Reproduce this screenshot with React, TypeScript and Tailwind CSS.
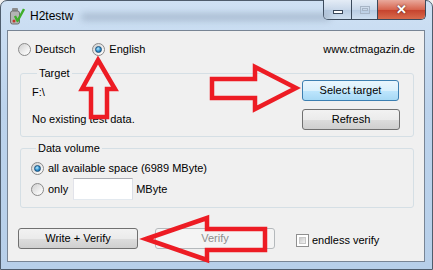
import React from "react";

const Radio = ({ checked }: { checked?: boolean }) => (
    <span className="flex items-center justify-center w-[13px] h-[13px] shrink-0 rounded-full border border-[#8a8a8a] bg-[linear-gradient(135deg,#cfcfcf,#f4f4f4_70%,#ffffff)]">
        {checked && (
            <span className="w-[7px] h-[7px] rounded-full border border-[#1b4f7a] bg-[radial-gradient(circle_at_40%_35%,#b8ecff,#2b8ccc_55%,#0f5c94)]" />
        )}
    </span>
);

const Button = ({
    label,
    w,
    focused,
    disabled,
}: {
    label: string;
    w: string;
    focused?: boolean;
    disabled?: boolean;
}) => {
    if (disabled) {
        return (
            <div className={`${w} h-[21px] flex items-center justify-center rounded-[3px] border border-[#b5b9bc] bg-[#f4f4f4] text-[#8d8d8d]`}>
                {label}
            </div>
        );
    }
    return (
        <div
            className={`${w} h-[21px] flex items-center justify-center rounded-[3px] border ${
                focused
                    ? "border-[#3c7fb1] bg-[linear-gradient(#eaf6fd,#d9f0fc_50%,#bee6fd_51%,#a7d9f5)]"
                    : "border-[#707070] bg-[linear-gradient(#f2f2f2,#ebebeb_50%,#dddddd_51%,#cfcfcf)]"
            }`}
        >
            {label}
        </div>
    );
};

const AppIcon = () => (
    <svg width="16" height="18" viewBox="0 0 16 18">
        <rect x="3" y="1" width="6" height="4" rx="1" fill="#8c8c8c" />
        <rect x="1.5" y="4" width="9" height="13" rx="2" fill="#b4b4b4" stroke="#6f6f6f" />
        <circle cx="5" cy="14" r="1.5" fill="#c0392b" />
        <path d="M6 9 L8.5 14 L15 2" fill="none" stroke="#3fae2a" strokeWidth="2.4" strokeLinejoin="round" />
    </svg>
);

export default function App() {
    return (
        <div className="relative w-[433px] h-[270px] overflow-hidden bg-[#f0f0f0] font-['Liberation_Sans',Arial,sans-serif] text-[11px] text-black">
            {/* window frame */}
            <div className="flex flex-col w-full h-full rounded-t-[7px] border border-[#4f5d6d] bg-[linear-gradient(#cfe1f4,#bcd3ec_40%,#b7cfe9)]">
                {/* title bar */}
                <div className="relative flex items-start h-[29px]">
                    <div className="absolute left-[80px] top-[12px] w-[250px] h-[8px] rounded-full bg-[#7d8fa6]/40 blur-[3px]" />
                    <div className="ml-[8px] mt-[6px]">
                        <AppIcon />
                    </div>
                    <span className="ml-[5px] mt-[8px] text-[12px] leading-[15px]">H2testw</span>
                    <div className="ml-auto mr-[6px] flex h-[20px] mt-[-1px] rounded-b-[5px] border border-t-0 border-[#3b4a5c] overflow-hidden">
                        <div className="w-[28px] h-full flex items-center justify-center border-r border-[#3b4a5c] bg-[linear-gradient(#e4ecf6,#c9d8ea_50%,#b7cbe2_51%,#cfdff0)]">
                            <div className="w-[10px] h-[4px] mt-[5px] bg-white border border-[#39475a]" />
                        </div>
                        <div className="w-[26px] h-full flex items-center justify-center border-r border-[#3b4a5c] bg-[linear-gradient(#e4ecf6,#c9d8ea_50%,#b7cbe2_51%,#cfdff0)]">
                            <div className="w-[10px] h-[8px] border border-[#a7b5c6] flex items-center justify-center">
                                <div className="w-[6px] h-[3px] border border-[#a7b5c6]" />
                            </div>
                        </div>
                        <div className="w-[47px] h-full flex items-center justify-center bg-[linear-gradient(#e9a99c,#d7654f_50%,#c5412c_51%,#d86b4c)]">
                            <span className="text-white font-bold text-[13px] leading-none [text-shadow:0_0_2px_#3a1a10]">✕</span>
                        </div>
                    </div>
                </div>

                {/* client area */}
                <div className="ml-[6px] mr-[7px] h-[232px] border border-[#788595] bg-[#f0f0f0] flex flex-col">
                    {/* language row */}
                    <div className="flex items-center h-[14px] mt-[11px] pl-[10px] pr-[9px]">
                        <Radio />
                        <span className="ml-[4px]">Deutsch</span>
                        <span className="ml-[17px]">
                            <Radio checked />
                        </span>
                        <span className="ml-[4px]">English</span>
                        <span className="ml-auto">www.ctmagazin.de</span>
                    </div>

                    {/* target */}
                    <fieldset className="mt-[11px] ml-[12px] mr-[10px] h-[70px] rounded-[3px] border border-[#d5dfe5] pl-[11px] pr-[13px] flex">
                        <legend className="ml-[5px] px-[2px] leading-[13px]">Target</legend>
                        <div className="flex w-full justify-between">
                            <div className="flex flex-col pt-[6px] leading-[13px]">
                                <span>F:\</span>
                                <span className="mt-[14px]">No existing test data.</span>
                            </div>
                            <div className="flex flex-col gap-[8px]">
                                <Button label="Select target" w="w-[97px]" focused />
                                <Button label="Refresh" w="w-[98px]" />
                            </div>
                        </div>
                    </fieldset>

                    {/* data volume */}
                    <fieldset className="mt-[5px] ml-[12px] mr-[10px] h-[66px] rounded-[3px] border border-[#d5dfe5] pl-[10px]">
                        <legend className="ml-[5px] px-[2px] leading-[13px]">Data volume</legend>
                        <div className="flex items-center h-[14px] mt-[6px]">
                            <Radio checked />
                            <span className="ml-[4px]">all available space (6989 MByte)</span>
                        </div>
                        <div className="flex items-center h-[22px] mt-[3px]">
                            <Radio />
                            <span className="ml-[4px]">only</span>
                            <div className="ml-[5px] w-[60px] h-[22px] bg-white border border-[#abadb3] border-l-[#e2e3ea] border-r-[#dbdfe6] border-b-[#e3e9ef]" />
                            <span className="ml-[3px]">MByte</span>
                        </div>
                    </fieldset>

                    {/* bottom row */}
                    <div className="flex items-center mt-[20px] ml-[10px]">
                        <Button label="Write + Verify" w="w-[120px]" />
                        <div className="ml-[17px]">
                            <Button label="Verify" w="w-[120px]" disabled />
                        </div>
                        <div className="ml-[21px] mt-[3px] w-[13px] h-[13px] border border-[#8f8f8f] p-[2px] bg-white">
                            <div className="w-full h-full bg-[linear-gradient(135deg,#cbcbcb,#f3f3f3)] border border-[#c8c8c8]" />
                        </div>
                        <span className="ml-[3px] mt-[3px]">endless verify</span>
                    </div>
                </div>
            </div>

            {/* red annotation arrows */}
            <svg className="absolute inset-0 pointer-events-none" width="433" height="270" viewBox="0 0 433 270">
                <g fill="none" stroke="#ed1c24" strokeWidth="4.5" strokeLinejoin="miter">
                    <polygon points="98,60 115,89 107,89 107,117 91,117 91,89 82,89" />
                    <polygon points="212,79 255,79 255,67 296,88 255,109 255,98 212,98" />
                    <polygon points="146,239 207,218 207,229 265,229 265,250 207,250 207,260" />
                </g>
            </svg>
        </div>
    );
}
